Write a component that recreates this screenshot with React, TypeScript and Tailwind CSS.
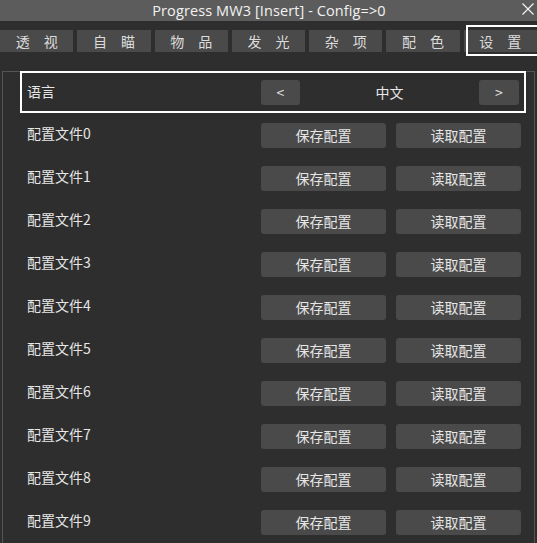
import React from "react";

const tabs = ["透　视", "自　瞄", "物　品", "发　光", "杂　项", "配　色", "设　置"];
const configs = Array.from({ length: 10 }, (_, i) => `配置文件${i}`);

const font = { fontFamily: '"Noto Sans CJK SC", "Noto Sans", sans-serif' };

function Btn({ children, className = "" }: { children: React.ReactNode; className?: string }) {
  return (
    <div
      className={`h-[25px] rounded-[3px] bg-[#4a4a4a] text-[#e6e6e6] text-[14px] leading-[24px] text-center ${className}`}
    >
      {children}
    </div>
  );
}

export default function App() {
  return (
    <div className="w-[537px] h-[543px] overflow-hidden bg-[#2e2e2e] flex flex-col" style={font}>
      {/* title bar */}
      <div className="relative h-[21px] bg-[#5c5c5c] flex items-center justify-center shrink-0">
        <span
          className="text-[#f2f2f2] text-[14.5px] leading-[21px] tracking-[0.1px] pl-[1px]"
          style={{ fontFamily: '"Open Sans", "Noto Sans", sans-serif' }}
        >
          Progress MW3 [Insert] - Config=&gt;0
        </span>
        <svg className="absolute right-[3px] top-[3px]" width="12" height="12" viewBox="0 0 12 12">
          <path d="M0.5 0.5 L11.5 11.5 M11.5 0.5 L0.5 11.5" stroke="#f2f2f2" strokeWidth="1.2" />
        </svg>
      </div>

      {/* tab strip */}
      <div className="mt-[9px] h-[22px] flex gap-[4px] shrink-0">
        {tabs.map((t, i) => (
          <div
            key={t}
            className="relative flex-1 bg-[#4a4a4a] text-[#dcdcdc] text-[14px] leading-[22px] text-center whitespace-pre"
          >
            {t}
            {i === tabs.length - 1 && (
              <span className="absolute left-[2px] -right-[4px] -top-[5px] -bottom-[4px] border-2 border-white" />
            )}
          </div>
        ))}
      </div>

      {/* settings panel */}
      <div className="mt-[19px] mx-[2px] flex-1 border-t border-l border-r border-[#555]">
        <div className="ml-[17px] mt-[-1px] w-[506px] h-[42px] border-2 border-white flex items-center pl-[5px] pr-[5px]">
          <div className="w-[234px] text-[#e6e6e6] text-[14px] leading-[20px] -mt-[3px]">语言</div>
          <Btn className="w-[39px]">&lt;</Btn>
          <div className="flex-1 text-center text-[#e6e6e6] text-[14px]">中文</div>
          <Btn className="w-[40px]">&gt;</Btn>
        </div>

        <div className="mt-[10px] ml-[24px] flex flex-col gap-[18px]">
          {configs.map((c) => (
            <div key={c} className="flex items-start h-[25px]">
              <div className="w-[234px] text-[#e6e6e6] text-[14px] leading-[20px]">{c}</div>
              <Btn className="w-[125px]">保存配置</Btn>
              <Btn className="w-[125px] ml-[10px]">读取配置</Btn>
            </div>
          ))}
        </div>
      </div>
    </div>
  );
}
